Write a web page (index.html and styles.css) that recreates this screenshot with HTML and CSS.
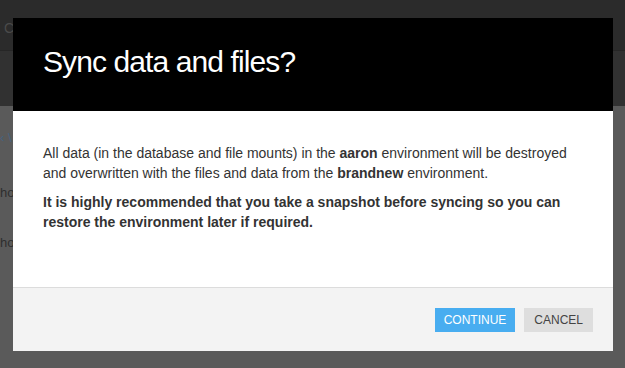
FILE: index.html
```html
<!DOCTYPE html>
<html lang="en">
<head>
    <meta charset="UTF-8">
    <title>Sync data and files?</title>
    <link rel="stylesheet" href="styles.css">
</head>
<body>

<!-- Page behind the dialog (already dimmed) -->
<div class="page">
    <div class="topbar"><span class="logo">C</span></div>
    <div class="subbar"></div>
    <div class="content">
        <div class="crumb">&lsaquo; \</div>
        <div class="row first">ho</div>
        <div class="row">ho</div>
    </div>
</div>

<!-- Dialog -->
<div class="modal">
    <div class="modal-header">
        <h1>Sync data and files?</h1>
    </div>
    <div class="modal-body">
        <p>All data (in the database and file mounts) in the <b>aaron</b> environment will be destroyed and overwritten with the files and data from the <b>brandnew</b> environment.</p>
        <p class="warning">It is highly recommended that you take a snapshot before syncing so you can restore the environment later if required.</p>
    </div>
    <div class="modal-footer">
        <button class="btn btn-primary">Continue</button>
        <button class="btn btn-default">Cancel</button>
    </div>
</div>

</body>
</html>
```

FILE: styles.css
```css
body {
    margin: 0;
    padding: 0;
    font-family: 'Liberation Sans', Arial, sans-serif;
    background-color: #5a5a5a;
    height: 368px;
    overflow: hidden;
}
.page {
    display: flex;
    flex-direction: column;
    height: 100%;
}
.topbar {
    height: 51px;
    background-color: #2b2b2b;
    border-bottom: 1px solid #262626;
    box-sizing: border-box;
    padding: 19px 0 0 4px;
}
.logo {
    color: #4a4a4a;
    font-size: 14px;
}
.subbar {
    height: 55px;
    background-color: #313131;
}
.content {
    flex-grow: 1;
    background-color: #5a5a5a;
    padding-top: 24px;
    font-size: 13px;
    color: #2e2e2e;
}
.crumb {
    color: #46627e;
    height: 20px;
}
.row {
    margin-top: 30px;
    height: 20px;
}
.row.first {
    margin-top: 35px;
}

/* dialog */
.modal {
    position: absolute;
    top: 18px;
    left: 13px;
    width: 600px;
    background-color: #fff;
}
.modal-header {
    background-color: #000;
    height: 93px;
    box-sizing: border-box;
    padding: 27px 30px 0;
}
.modal-header h1 {
    margin: 0;
    color: #fff;
    font-weight: normal;
    font-size: 30px;
    line-height: 34px;
    letter-spacing: -0.9px;
}
.modal-body {
    padding: 32px 30px 46px;
    font-size: 14px;
    line-height: 20px;
    color: #333;
    border-bottom: 1px solid #dcdcdc;
}
.modal-body p {
    margin: 0 0 9px;
}
.modal-body .warning {
    font-weight: bold;
}
.modal-footer {
    background-color: #f3f3f3;
    height: 63px;
    box-sizing: border-box;
    padding: 0 20px;
    display: flex;
    justify-content: flex-end;
    align-items: center;
    gap: 9px;
}
.btn {
    font-family: 'Liberation Sans', Arial, sans-serif;
    font-size: 12px;
    text-transform: uppercase;
    height: 24px;
    padding: 0 10px;
    border: none;
    border-radius: 0;
    cursor: pointer;
}
.btn-primary {
    background-color: #48adf0;
    color: #fff;
    padding: 0 9px;
}
.btn-default {
    background-color: #dedede;
    color: #444;
}
```
